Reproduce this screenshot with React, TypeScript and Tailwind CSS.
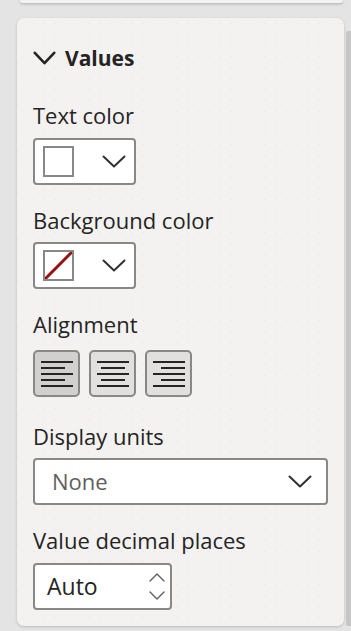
import React from "react";

const Chevron = ({ w, h, sw, color }: { w: number; h: number; sw: number; color: string }) => (
  <svg width={w} height={h} viewBox={`0 0 ${w} ${h}`} fill="none">
    <path d={`M${sw / 2 + 0.5} ${sw / 2 + 0.5} L${w / 2} ${h - sw / 2 - 0.5} L${w - sw / 2 - 0.5} ${sw / 2 + 0.5}`} stroke={color} strokeWidth={sw} strokeLinecap="round" strokeLinejoin="round" />
  </svg>
);

const AlignIcon = ({ kind }: { kind: "left" | "center" | "right" }) => {
  const short = (y: number) => {
    const x1 = kind === "left" ? 0 : kind === "center" ? 4 : 8;
    return <rect x={x1} y={y} width={24} height={2} fill="#252423" />;
  };
  return (
    <svg width={32} height={26} viewBox="0 0 32 26">
      <rect x={0} y={0} width={32} height={2} fill="#252423" />
      {short(6)}
      <rect x={0} y={12} width={32} height={2} fill="#252423" />
      {short(18)}
      <rect x={0} y={24} width={32} height={2} fill="#252423" />
    </svg>
  );
};

const ColorPicker = ({ none }: { none?: boolean }) => (
  <div className="flex h-[47px] w-[103px] items-center rounded-[4px] border-2 border-[#8a8886] bg-white pl-[8px]">
    <div className="relative h-[31px] w-[31px] border-2 border-[#8a8886] bg-white">
      {none && (
        <svg className="absolute inset-0" width={27} height={27} viewBox="0 0 27 27">
          <line x1={1} y1={26} x2={26} y2={1} stroke="#9b0f12" strokeWidth={3} strokeLinecap="round" />
        </svg>
      )}
    </div>
    <div className="ml-[28px]">
      <Chevron w={24} h={13} sw={2} color="#323130" />
    </div>
  </div>
);

export default function App() {
  return (
    <div
      className="relative h-[631px] w-[351px] overflow-hidden bg-[#e4e4e4] text-[#252423]"
      style={{ fontFamily: '"Open Sans", "Noto Sans", sans-serif' }}
    >
      {/* previous card bottom */}
      <div className="mx-[20px] mr-[8px] h-[3px] rounded-b-[6px] bg-[#f3f2f1] shadow-[0_1px_3px_rgba(0,0,0,0.25)]" />
      {/* scrollbar */}
      <div className="absolute right-0 top-[31px] h-[595px] w-[5px] rounded-l-[2px] bg-[#c6c6c6]" />

      <div className="ml-[17px] mt-[15px] w-[327px] rounded-[7px] bg-[#f3f2f1] bg-[radial-gradient(#e4e3e2_0.8px,transparent_1px)] bg-[length:11px_11px] pb-[16px] pl-[16px] pt-[26px] shadow-[0_1px_3px_rgba(0,0,0,0.18)]">
        <div className="flex h-[28px] items-center">
          <Chevron w={23} h={14} sw={2.6} color="#252423" />
          <span className="ml-[9px] text-[21px] font-bold leading-[28px]">Values</span>
        </div>

        <div className="mt-[29px] text-[22px] leading-[28px]">Text color</div>
        <div className="mt-[9px]">
          <ColorPicker />
        </div>

        <div className="mt-[21px] text-[22px] leading-[28px]">Background color</div>
        <div className="mt-[8px]">
          <ColorPicker none />
        </div>

        <div className="mt-[21px] text-[22px] leading-[28px]">Alignment</div>
        <div className="mt-[12px] flex gap-[9px]">
          <div className="flex h-[47px] w-[47px] items-center justify-center rounded-[5px] border-2 border-[#8a8886] bg-[#d1d0cf]">
            <AlignIcon kind="left" />
          </div>
          <div className="flex h-[47px] w-[47px] items-center justify-center rounded-[5px] border-2 border-[#8a8886] bg-[#e1e0df]">
            <AlignIcon kind="center" />
          </div>
          <div className="flex h-[47px] w-[47px] items-center justify-center rounded-[5px] border-2 border-[#8a8886] bg-[#e1e0df]">
            <AlignIcon kind="right" />
          </div>
        </div>

        <div className="mt-[25px] text-[22px] leading-[28px]">Display units</div>
        <div className="mt-[8px] flex h-[47px] w-[295px] items-center justify-between rounded-[4px] border-2 border-[#8a8886] bg-white pl-[17px] pr-[14px]">
          <span className="text-[22px] text-[#605e5c]">None</span>
          <Chevron w={24} h={13} sw={2} color="#323130" />
        </div>

        <div className="mt-[21px] text-[22px] leading-[28px]">Value decimal places</div>
        <div className="mt-[9px] flex h-[47px] w-[139px] items-center justify-between rounded-[4px] border-2 border-[#8a8886] bg-white pl-[12px] pr-[5px]">
          <span className="text-[23px] text-[#252423]">Auto</span>
          <div className="flex flex-col gap-[9px]">
            <svg width={16} height={9} viewBox="0 0 16 9" fill="none">
              <path d="M1 8 L8 1 L15 8" stroke="#605e5c" strokeWidth={1.4} strokeLinecap="round" strokeLinejoin="round" />
            </svg>
            <svg width={16} height={9} viewBox="0 0 16 9" fill="none">
              <path d="M1 1 L8 8 L15 1" stroke="#605e5c" strokeWidth={1.4} strokeLinecap="round" strokeLinejoin="round" />
            </svg>
          </div>
        </div>
      </div>
    </div>
  );
}
